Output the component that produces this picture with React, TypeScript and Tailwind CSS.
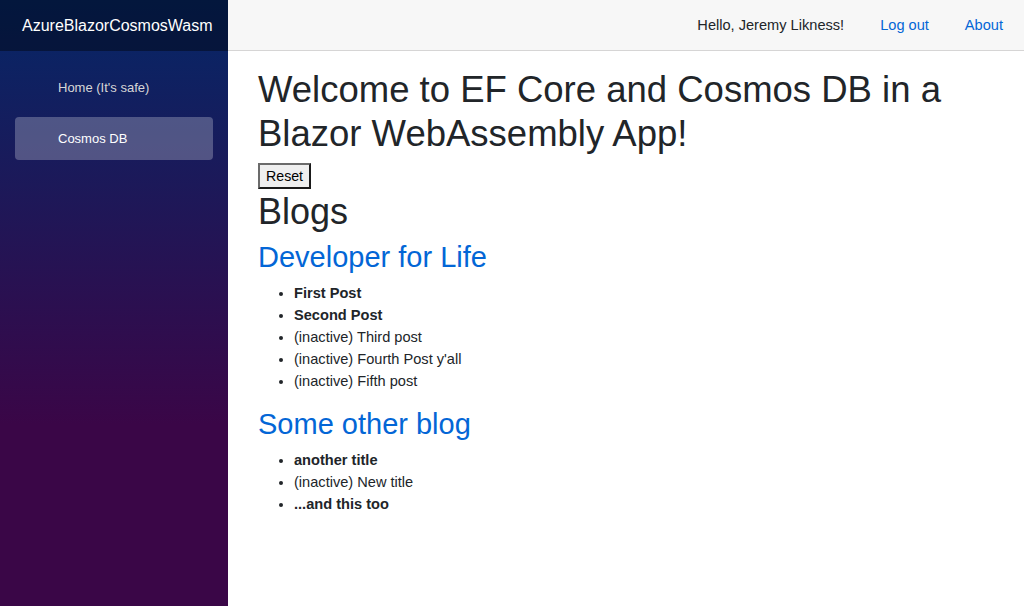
import React from 'react';

const blogs = [
  {
    name: 'Developer for Life',
    posts: [
      { title: 'First Post', active: true },
      { title: 'Second Post', active: true },
      { title: 'Third post', active: false },
      { title: "Fourth Post y'all", active: false },
      { title: 'Fifth post', active: false },
    ],
  },
  {
    name: 'Some other blog',
    posts: [
      { title: 'another title', active: true },
      { title: 'New title', active: false },
      { title: '...and this too', active: true },
    ],
  },
];

export default function App() {
  return (
    <div className="flex h-screen w-full font-['Liberation_Sans',Arial,sans-serif] text-[14.6px] leading-[1.5] text-[#212529]">
      {/* Sidebar */}
      <aside className="w-[228px] flex-shrink-0 bg-[linear-gradient(180deg,rgb(5,39,103)_0%,#3a0647_70%)]">
        <div className="flex h-[51px] items-center bg-black/40 pl-[22px] text-[16px] text-white">
          AzureBlazorCosmosWasm
        </div>
        <nav className="px-[15px] pt-[15.4px]">
          <div className="pb-[7.2px]">
            <a className="flex h-[43.2px] items-center rounded pl-[43px] text-[13px] text-[#d7d7d7]">
              Home (It's safe)
            </a>
          </div>
          <div className="pb-[7.2px]">
            <a className="flex h-[43.2px] items-center rounded bg-white/25 pl-[43px] text-[13px] text-white">
              Cosmos DB
            </a>
          </div>
        </nav>
      </aside>

      {/* Main */}
      <div className="flex min-w-0 flex-1 flex-col">
        <header className="flex h-[51px] flex-shrink-0 items-center justify-end gap-[36px] border-b border-[#d6d5d5] bg-[#f7f7f7] pr-[21px] pt-[2px]">
          <span>Hello, Jeremy Likness!</span>
          <a className="text-[#0366d6]">Log out</a>
          <a className="text-[#0366d6]">About</a>
        </header>

        <main className="pl-[30px] pr-[22px] pt-[17px]">
          <h1 className="mb-[7.2px] text-[36.5px] font-normal leading-[1.2]">
            Welcome to EF Core and Cosmos DB in a Blazor WebAssembly App!
          </h1>
          <button className="block h-[26px] border-2 border-t-[#6b6b6b] border-l-[#6b6b6b] border-b-[#1a1a1a] border-r-[#1a1a1a] bg-[#efefef] px-[6px] text-[14.2px] leading-none text-black">
            Reset
          </button>
          <h2 className="mb-[7.2px] mt-[1px] text-[36px] font-normal leading-[1.2]">Blogs</h2>
          {blogs.map((blog) => (
            <div key={blog.name}>
              <h3 className="mb-[7.2px] text-[29px] font-normal leading-[1.2] text-[#0366d6]">
                {blog.name}
              </h3>
              <ul className="mb-[14.4px] list-disc pl-[36px]">
                {blog.posts.map((post) => (
                  <li key={post.title} className="leading-[22px]">
                    {post.active ? (
                      <strong className="font-bold">{post.title}</strong>
                    ) : (
                      <span>(inactive) {post.title}</span>
                    )}
                  </li>
                ))}
              </ul>
            </div>
          ))}
        </main>
      </div>
    </div>
  );
}
